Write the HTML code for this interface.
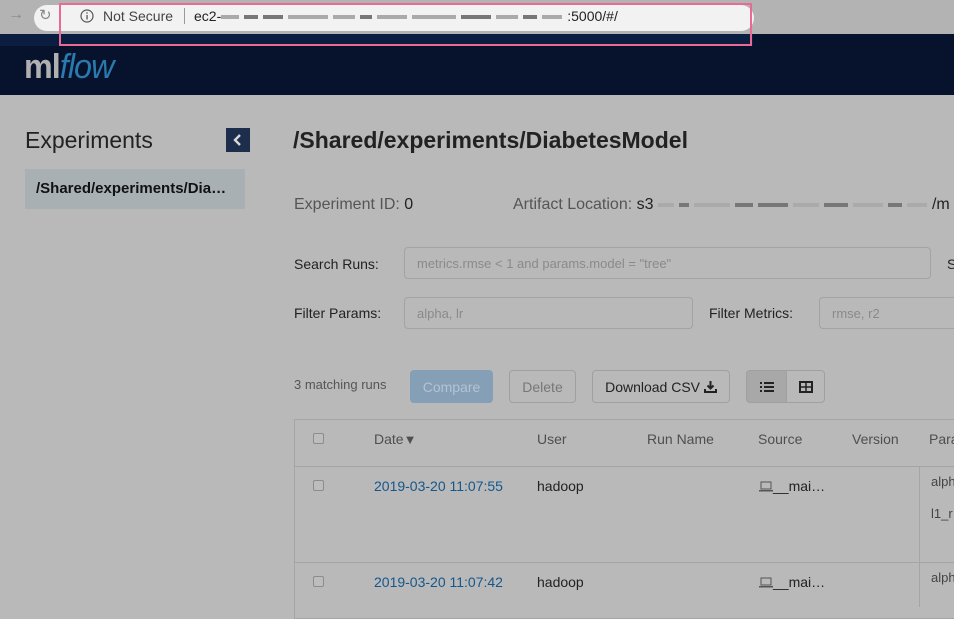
<!DOCTYPE html>
<html><head><meta charset="utf-8"><style>
*{margin:0;padding:0;box-sizing:border-box}
body{width:954px;height:598px;overflow:hidden;background:#b9b9b9;font-family:"Liberation Sans",Arial,sans-serif;position:relative;color:#222}
.a{position:absolute;white-space:nowrap}
.inp{position:absolute;border:1px solid #a3a3a3;border-radius:4px;color:#8a8a8a;font-size:13px;padding-left:12px;display:flex;align-items:center}
.btn{position:absolute;border:1px solid #a0a0a0;border-radius:4px;font-size:14px;display:flex;align-items:center;justify-content:center}
.cb{position:absolute;width:11px;height:11px;border:1px solid #8c8c8c;border-radius:2px;background:#bdbdbd}
.th{position:absolute;font-size:14px;color:#4f4f4f}
.blk{display:inline-block;height:4px;background:#777;margin-right:5px;vertical-align:middle}
.lb{background:#aaa}
</style></head><body>
<!-- browser bar -->
<div class="a" style="left:0;top:0;width:954px;height:34px;background:#b3b3b3"></div>
<div class="a" style="left:34px;top:5px;width:720px;height:26px;background:#f2f2f2;border-radius:13px"></div>
<div class="a" style="left:8px;top:6px;font-size:16px;color:#888">→</div>
<div class="a" style="left:39px;top:6px;font-size:15px;color:#888">↻</div>
<svg class="a" style="left:80px;top:9px" width="14" height="14"><circle cx="7" cy="7" r="6" fill="none" stroke="#555" stroke-width="1.2"/><rect x="6.4" y="6" width="1.3" height="4.5" fill="#555"/><rect x="6.4" y="3.3" width="1.3" height="1.4" fill="#555"/></svg>
<div class="a" style="left:103px;top:8px;font-size:14px;color:#444">Not Secure</div>
<div class="a" style="left:184px;top:8px;width:1px;height:16px;background:#999"></div>
<div class="a" style="left:194px;top:8px;font-size:14px;color:#222">ec2-<span class="blk lb" style="width:18px"></span><span class="blk" style="width:14px"></span><span class="blk" style="width:20px"></span><span class="blk lb" style="width:40px"></span><span class="blk lb" style="width:22px"></span><span class="blk" style="width:12px"></span><span class="blk lb" style="width:30px"></span><span class="blk lb" style="width:44px"></span><span class="blk" style="width:30px"></span><span class="blk lb" style="width:22px"></span><span class="blk" style="width:14px"></span><span class="blk lb" style="width:20px"></span>:5000/#/</div>
<!-- nav -->
<div class="a" style="left:0;top:34px;width:954px;height:61px;background:#07132d"></div>
<div class="a" style="left:0;top:34px;width:753px;height:12px;background:#0b1e42"></div>
<div class="a" style="left:59px;top:3px;width:693px;height:43px;border:2px solid #e86a95"></div>
<div class="a" style="left:24px;top:48px;font-size:34px;color:#b0b0b0;letter-spacing:-1px;font-weight:bold;transform:scaleX(0.95);transform-origin:left">ml<span style="color:#2a7ab0;font-style:italic;font-weight:normal">flow</span></div>
<!-- sidebar -->
<div class="a" style="left:25px;top:127px;font-size:23px;color:#222">Experiments</div>
<div class="a" style="left:226px;top:128px;width:24px;height:24px;background:#1d2d4c"></div>
<svg class="a" style="left:226px;top:128px" width="24" height="24"><path d="M14 7 L9 12 L14 17" fill="none" stroke="#d8d8d8" stroke-width="2.4"/></svg>
<div class="a" style="left:25px;top:169px;width:220px;height:40px;background:#a9b0b3"></div>
<div class="a" style="left:36px;top:180px;font-size:15px;font-weight:bold;color:#111">/Shared/experiments/Dia…</div>
<!-- main -->
<div class="a" style="left:293px;top:127px;font-size:23px;font-weight:bold;color:#222">/Shared/experiments/DiabetesModel</div>
<div class="a" style="left:294px;top:196px;font-size:16px;color:#555">Experiment ID: <span style="color:#222">0</span></div>
<div class="a" style="left:513px;top:196px;font-size:16px;color:#555">Artifact Location: <span style="color:#222">s3</span> <span class="blk lb" style="width:16px"></span><span class="blk" style="width:10px"></span><span class="blk lb" style="width:36px"></span><span class="blk" style="width:18px"></span><span class="blk" style="width:30px"></span><span class="blk lb" style="width:26px"></span><span class="blk" style="width:24px"></span><span class="blk lb" style="width:30px"></span><span class="blk" style="width:14px"></span><span class="blk lb" style="width:20px"></span><span style="color:#222">/m</span></div>
<div class="a" style="left:294px;top:256px;font-size:14px">Search Runs:</div>
<div class="inp" style="left:404px;top:247px;width:527px;height:32px">metrics.rmse &lt; 1 and params.model = "tree"</div>
<div class="a" style="left:947px;top:256px;font-size:14px">S</div>
<div class="a" style="left:294px;top:305px;font-size:14px">Filter Params:</div>
<div class="inp" style="left:404px;top:297px;width:289px;height:32px">alpha, lr</div>
<div class="a" style="left:709px;top:305px;font-size:14px">Filter Metrics:</div>
<div class="inp" style="left:819px;top:297px;width:140px;height:32px">rmse, r2</div>
<!-- buttons -->
<div class="a" style="left:294px;top:377px;font-size:13px;color:#555">3 matching runs</div>
<div class="btn" style="left:410px;top:370px;width:83px;height:33px;background:#859fb7;border-color:#859fb7;color:#b3c3d1">Compare</div>
<div class="btn" style="left:509px;top:370px;width:67px;height:33px;color:#777">Delete</div>
<div class="btn" style="left:592px;top:370px;width:138px;height:33px;color:#222">Download CSV&nbsp;<svg width="13" height="13"><path d="M6.5 1V8M3.5 5.5L6.5 8.5L9.5 5.5" stroke="#222" stroke-width="2" fill="none"/><path d="M1 9V12H12V9" stroke="#222" stroke-width="2" fill="none"/></svg></div>
<div class="btn" style="left:746px;top:370px;width:41px;height:33px;background:#a8a8a8;border-radius:4px 0 0 4px"><svg width="14" height="12"><g fill="#222"><rect x="0" y="1" width="2" height="2"/><rect x="0" y="5" width="2" height="2"/><rect x="0" y="9" width="2" height="2"/><rect x="4" y="1" width="10" height="2"/><rect x="4" y="5" width="10" height="2"/><rect x="4" y="9" width="10" height="2"/></g></svg></div>
<div class="btn" style="left:786px;top:370px;width:39px;height:33px;border-radius:0 4px 4px 0"><svg width="14" height="12"><rect x="1" y="1" width="12" height="10" fill="none" stroke="#222" stroke-width="2"/><path d="M1 6H13M7 1V11" stroke="#222" stroke-width="1.5"/></svg></div>
<!-- table -->
<div class="a" style="left:294px;top:419px;width:670px;height:200px;border:1px solid #a5a5a5"></div>
<div class="a" style="left:295px;top:466px;width:660px;height:1px;background:#a5a5a5"></div>
<div class="a" style="left:295px;top:562px;width:660px;height:1px;background:#a5a5a5"></div>
<div class="a" style="left:919px;top:467px;width:1px;height:140px;background:#a5a5a5"></div>
<div class="cb" style="left:313px;top:433px"></div>
<div class="th" style="left:374px;top:431px">Date<span style="font-size:13px">▼</span></div>
<div class="th" style="left:537px;top:431px">User</div>
<div class="th" style="left:647px;top:431px">Run Name</div>
<div class="th" style="left:758px;top:431px">Source</div>
<div class="th" style="left:852px;top:431px">Version</div>
<div class="th" style="left:929px;top:431px">Para</div>
<div class="cb" style="left:313px;top:480px"></div>
<div class="a" style="left:374px;top:478px;font-size:14px;color:#14578c">2019-03-20 11:07:55</div>
<div class="a" style="left:537px;top:478px;font-size:14px">hadoop</div>
<svg class="a" style="left:759px;top:481px" width="14" height="11"><rect x="2" y="1" width="10" height="7" fill="none" stroke="#555" stroke-width="1"/><rect x="0" y="9" width="14" height="1.5" fill="#555"/></svg>
<div class="a" style="left:773px;top:478px;font-size:14px">__mai…</div>
<div class="a" style="left:931px;top:474px;font-size:13px;color:#444">alph</div>
<div class="a" style="left:931px;top:506px;font-size:13px;color:#444">l1_r</div>
<div class="cb" style="left:313px;top:576px"></div>
<div class="a" style="left:374px;top:574px;font-size:14px;color:#14578c">2019-03-20 11:07:42</div>
<div class="a" style="left:537px;top:574px;font-size:14px">hadoop</div>
<svg class="a" style="left:759px;top:577px" width="14" height="11"><rect x="2" y="1" width="10" height="7" fill="none" stroke="#555" stroke-width="1"/><rect x="0" y="9" width="14" height="1.5" fill="#555"/></svg>
<div class="a" style="left:773px;top:574px;font-size:14px">__mai…</div>
<div class="a" style="left:931px;top:570px;font-size:13px;color:#444">alph</div>
</body></html>
